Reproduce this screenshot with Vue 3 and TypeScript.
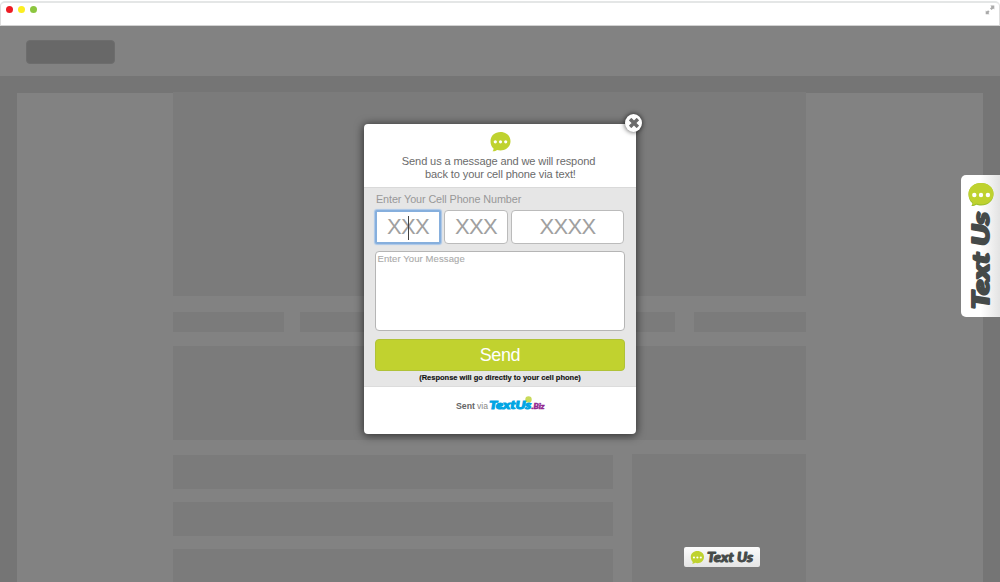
<script setup lang="ts">
import { ref } from 'vue'

const cells: number[] = [1, 2, 3, 4]
const rows: number[] = [1, 2, 3]
const phoneParts = ref([
  { id: 'area', hint: 'XXX', active: true },
  { id: 'prefix', hint: 'XXX', active: false },
  { id: 'line', hint: 'XXXX', active: false },
])
</script>

<template>
  <div class="window">
    <header class="chrome">
      <div class="lights">
        <i class="red"></i><i class="yellow"></i><i class="green"></i>
      </div>
      <svg class="expand" width="10" height="10" viewBox="0 0 10 10">
        <path d="M5.400.6H9.300v3.900L8.200 3.600 6.600 5 5 3.500 6.500 1.900zM4.500 9.300H.7V5.500l1.100 1 1.300-1.200 1.500 1.500-1.200 1.300z" fill="#aaa" />
      </svg>
    </header>

    <nav class="topbar"><div class="brand"></div></nav>

    <main class="site">
      <div class="paper">
        <div class="content">
          <div class="block hero"></div>
          <div class="cells"><div v-for="c in cells" :key="c" class="block"></div></div>
          <div class="block banner"></div>
          <div class="columns">
            <div class="rows"><div v-for="r in rows" :key="r" class="block"></div></div>
            <div class="block side"></div>
          </div>
        </div>
      </div>
    </main>

    <section class="modal">
      <button class="close" aria-label="Close">
        <svg width="10" height="10" viewBox="0 0 10 10">
          <path d="M2.300 2.300l5.400 5.400M7.700 2.300L2.300 7.700" stroke="#6b6b6b" stroke-width="3.500" stroke-linecap="square" />
        </svg>
      </button>
      <div class="intro">
        <svg class="bubble" width="21" height="20" viewBox="0 0 26 25">
          <path d="M13 0C20 0 25.500 4.600 25.500 11.500S20 23 13 23c-1.500 0-3-.2-4.300-.6C7.500 23.600 5.500 24.300 3 24.200c1-.9 1.400-2 1.300-3.600C2 18.500.5 15.500.5 11.500.5 4.600 6 0 13 0z" fill="#bfd22f" />
          <g fill="#fff"><circle cx="6.500" cy="12.300" r="2" /><circle cx="13" cy="12.300" r="2" /><circle cx="19.500" cy="12.300" r="2" /></g>
        </svg>
        <p class="line1">Send us a message and we will respond</p>
        <p class="line2">back to your cell phone via text!</p>
      </div>
      <div class="form">
        <label class="label">Enter Your Cell Phone Number</label>
        <div class="phone">
          <div v-for="p in phoneParts" :key="p.id" class="field" :class="[p.id, { active: p.active }]">
            <span>{{ p.hint }}</span>
            <i v-if="p.active" class="caret"></i>
          </div>
        </div>
        <div class="message"><span>Enter Your Message</span></div>
        <button class="send"><span>Send</span></button>
        <p class="note">(Response will go directly to your cell phone)</p>
      </div>
      <footer class="via">
        <svg width="92" height="18" viewBox="0 0 92 18">
          <text x="1" y="13.500" class="sent" textLength="19" lengthAdjust="spacingAndGlyphs">Sent</text>
          <text x="22" y="13.500" class="by" textLength="11" lengthAdjust="spacingAndGlyphs">via</text>
          <circle cx="73.500" cy="4.500" r="3.200" fill="#c9da5a" />
          <text x="34.300" y="13.700" class="logo" textLength="42" lengthAdjust="spacingAndGlyphs">TextUs</text>
          <text x="76.500" y="14" class="biz" textLength="13" lengthAdjust="spacingAndGlyphs">.Biz</text>
        </svg>
      </footer>
    </section>

    <aside class="tab">
      <svg width="39" height="141" viewBox="0 0 39 141">
        <g transform="translate(7 8)">
          <path d="M13 0C20 0 25.500 4.700 25.500 11.200S20 22.500 13 22.500c-2 0-3.500-.3-4.800-.7-1.200.9-2.800 1.300-5 1.200 1-.8 1.300-1.700 1-2.900C1.800 18 .5 15 .5 11.200.5 4.700 6 0 13 0z" fill="#9fc02f" />
          <path d="M13 0C20 0 25.500 4.500 25.500 10.700S20 21.300 13 21.300c-2 0-3.500-.3-4.800-.7-1.100.8-2.200 1.200-3.500 1.300.5-.8.400-1.700 0-2.600C1.800 17 .5 14.300.5 10.700.5 4.500 6 0 13 0z" fill="#bfd22f" />
          <g fill="#fff"><circle cx="6.300" cy="12" r="2.200" /><circle cx="13" cy="12" r="2.200" /><circle cx="19.900" cy="12" r="2.200" /></g>
        </g>
        <text transform="translate(28 134) rotate(-90)" class="heavy big" textLength="97" lengthAdjust="spacingAndGlyphs">Text Us</text>
      </svg>
    </aside>

    <button class="badge">
      <svg width="76" height="20" viewBox="0 0 76 20">
        <g transform="translate(6.500 4) scale(.53)">
          <path d="M13 0C20 0 25.500 4.600 25.500 11.500S20 23 13 23c-1.500 0-3-.2-4.300-.6C7.500 23.600 5.500 24.300 3 24.200c1-.9 1.400-2 1.300-3.600C2 18.500.5 15.500.5 11.500.5 4.600 6 0 13 0z" fill="#bfd22f" />
          <g fill="#fff"><circle cx="6.500" cy="12.300" r="2" /><circle cx="13" cy="12.300" r="2" /><circle cx="19.500" cy="12.300" r="2" /></g>
        </g>
        <text x="23" y="14.600" class="heavy small" textLength="46" lengthAdjust="spacingAndGlyphs">Text Us</text>
      </svg>
    </button>
  </div>
</template>

<style>
html, body { background: #757575; overflow: hidden; }
</style>

<style scoped>
* { box-sizing: border-box; }
p { margin: 0; }
button { border: 0; padding: 0; font: inherit; }
svg { display: block; }
.window {
  position: relative;
  width: 1000px;
  height: 582px;
  overflow: hidden;
  background: linear-gradient(#fff 20px, #757575 20px);
  font-family: "Liberation Sans", Arial, sans-serif;
  display: flex;
  flex-direction: column;
}
.chrome {
  flex: none;
  height: 25px;
  margin-top: 1px;
  background: #fff;
  border: 1px solid #dedede;
  border-top: 2px solid #e4e6e6;
  border-bottom: 1px solid #d2d2d2;
  border-radius: 5px 5px 0 0;
  display: flex;
  justify-content: space-between;
  padding: 3px 4px 0 5px;
}
.lights { display: flex; gap: 5px; }
.lights i { width: 7px; height: 7px; border-radius: 50%; }
.red { background: #ed1c24; }
.yellow { background: #fcee21; }
.green { background: #8cc63f; }
.expand { margin-top: -1px; }
.topbar { flex: none; height: 50px; background: #828282; padding: 14px 26px; }
.brand { width: 89px; height: 24px; border-radius: 4px; background: #686868; border: 1px solid #6d6d6d; }
.site { flex: 1; min-height: 0; padding: 17px 17px 0; display: flex; background: #757575; }
.paper { flex: none; width: 966px; height: 489px; background: #828282; padding: 0 177px 0 156px; display: flex; flex-direction: column; }
.content { display: flex; flex-direction: column; margin-top: -1px; }
.block { background: #7b7b7b; }
.hero { height: 204px; margin-bottom: 16px; }
.cells { display: grid; grid-template-columns: 111px 180px 182px 112px; gap: 16px; height: 20px; margin-bottom: 14px; }
.cells .block:nth-child(3) { margin-right: 3px; }
.banner { height: 94px; margin-bottom: 14px; }
.columns { display: grid; grid-template-columns: 440px 174px; justify-content: space-between; height: 130px; }
.rows { display: flex; flex-direction: column; gap: 13px; padding-top: 1px; }
.rows .block { height: 34px; flex: none; }

.modal {
  position: absolute;
  left: 364px;
  top: 124px;
  width: 272px;
  height: 310px;
  border-radius: 4px;
  background: #fff;
  box-shadow: 0 1px 8px 1px rgba(0, 0, 0, .58);
  display: flex;
  flex-direction: column;
}
.close {
  position: absolute;
  right: -6px;
  top: -10px;
  width: 17px;
  height: 18px;
  border-radius: 50%;
  background: #fff;
  box-shadow: 0 0 4px 1px rgba(0, 0, 0, .5);
  display: grid;
  place-items: center;
}
.intro { height: 63px; display: flex; flex-direction: column; align-items: center; padding-top: 8px; color: #6b6b6b; font-size: 11.500px; line-height: 13px; white-space: nowrap; }
.line1, .line2 { letter-spacing: -.13px; transform: scaleX(.962); }
.line1 { margin-top: 3px; margin-left: -3px; }
.form { height: 200px; background: #e6e6e6; border-top: 1px solid #d9d9d9; border-bottom: 1px solid #dcdcdc; padding: 4px 11px 0; display: flex; flex-direction: column; }
.label { height: 18px; padding-left: 1px; font-size: 11.500px; line-height: 15px; color: #989898; white-space: nowrap; letter-spacing: -.1px; transform: scaleX(.94); transform-origin: 0 50%; }
.phone { display: grid; grid-template-columns: 66px 64px 113px; gap: 3px; height: 34px; }
.field { position: relative; background: #fff; border: 1px solid #bbb; border-radius: 4px; display: grid; place-items: center; font-size: 22px; line-height: 30px; color: #a0a0a0; letter-spacing: -.7px; }
.field.active { border: 2px solid #86afdd; box-shadow: 0 0 1px 1px #a9c6e8; border-radius: 2px; }
.caret { position: absolute; left: 31px; top: 4px; width: 1px; height: 24px; background: #444; }
.message { height: 80px; margin-top: 7px; border: 1px solid #b5b5b5; border-radius: 4px; background: #fff; padding: 1px 1.500px; font-size: 9.500px; line-height: 12px; color: #aaa; letter-spacing: .1px; -webkit-text-stroke: .1px #aaa; }
.send { height: 32px; margin-top: 8px; flex: none; border: 1px solid #b0c238; border-radius: 4px; background: #c1d22f; color: #fff; font-size: 18px; line-height: 30px; letter-spacing: -.4px; }
.note { margin-top: 2px; text-align: center; font-size: 7.500px; line-height: 10px; font-weight: bold; color: #111; white-space: nowrap; -webkit-text-stroke: .15px #111; }
.via { display: flex; padding: 8px 0 0 91px; }
.sent { font: bold 8.500px "Liberation Sans", sans-serif; fill: #666; }
.by { font: 8.500px "Liberation Sans", sans-serif; fill: #888; }
.logo { font: italic 900 12px Lato, sans-serif; fill: #00a5e3; stroke: #00a5e3; stroke-width: 1px; }
.biz { font: italic 900 7.500px Lato, sans-serif; fill: #92278f; stroke: #92278f; stroke-width: .5px; }
.heavy { font-family: Lato, sans-serif; font-weight: 900; font-style: italic; fill: #454a49; stroke: #454a49; stroke-linejoin: round; }
.big { font-size: 23.500px; stroke-width: 2px; }
.small { font-size: 12.300px; stroke-width: .9px; }
.tab { position: absolute; right: 0; top: 175px; width: 39px; height: 142px; border-radius: 5px 0 0 5px; background: linear-gradient(90deg, #fff 50%, #e3e3e3); }
.badge { position: absolute; left: 684px; top: 547px; width: 76px; height: 20px; border-radius: 2px; background: linear-gradient(#fcfcfc, #e4e4e4); }
</style>
